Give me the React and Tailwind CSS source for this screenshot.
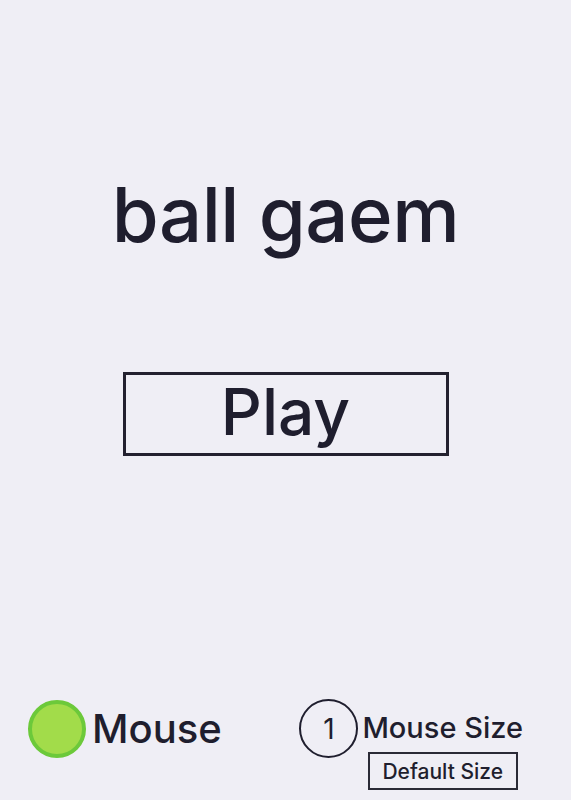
export default function App() {
  return (
    <div className="h-screen w-full bg-[#efeef5] text-[#1f1e2e] flex flex-col">
      <div className="flex flex-col items-center font-['Inter',sans-serif]">
        <h1 className="mt-[164px] text-[76px] leading-[100px] font-medium tracking-[-0.5px]">ball gaem</h1>
        <button className="mt-[108px] w-[326px] h-[84px] border-[3px] border-[#23212f] text-[64px] font-medium leading-none flex items-center justify-center pb-[4px]">
          Play
        </button>
      </div>
      <div className="mt-auto mb-[10px] flex justify-between items-start pl-[28px] pr-[48px] font-['Inter',sans-serif]">
        <div className="flex items-center gap-[6px] mt-[2px]">
          <div className="w-[58px] h-[58px] rounded-full bg-[#a2dc4a] border-[4px] border-[#6cc93a]" />
          <span className="text-[40px] font-medium leading-none">Mouse</span>
        </div>
        <div className="flex items-start gap-[4px] mt-[1px]">
          <div className="w-[59px] h-[59px] rounded-full border-[2.5px] border-[#1f1e2e] flex items-center justify-center text-[28px] leading-none">1</div>
          <div className="flex flex-col items-center">
            <span className="text-[29px] font-medium leading-[58px]">Mouse Size</span>
            <button className="-mt-[5px] w-[150px] h-[38px] border-2 border-[#2a2a36] text-[21px] font-medium leading-none flex items-center justify-center">
              Default Size
            </button>
          </div>
        </div>
      </div>
    </div>
  );
}
